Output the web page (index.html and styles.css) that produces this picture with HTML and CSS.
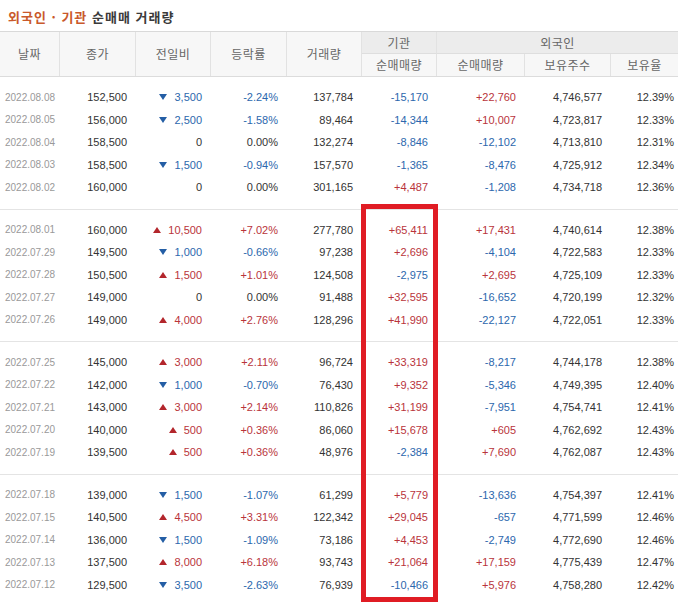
FILE: index.html
```html
<!DOCTYPE html>
<html lang="ko">
<head>
<meta charset="utf-8">
<title>외국인 · 기관 순매매 거래량</title>
<link rel="stylesheet" href="styles.css">
</head>
<body>
<div class="page">
  <h2 class="title"><span class="accent">외국인 · 기관</span> 순매매 거래량</h2>
  <div class="head">
    <div class="hc span2">날짜</div>
    <div class="hc span2">종가</div>
    <div class="hc span2">전일비</div>
    <div class="hc span2">등락률</div>
    <div class="hc span2">거래량</div>
    <div class="hc grp">기관</div>
    <div class="hc grp grp3 last">외국인</div>
    <div class="hc">순매매량</div>
    <div class="hc">순매매량</div>
    <div class="hc">보유주수</div>
    <div class="hc last">보유율</div>
  </div>

  <div class="group">
    <div class="row"><span class="date">2022.08.08</span><span>152,500</span><span class="dn"><i class="tri"></i>3,500</span><span class="dn">-2.24%</span><span>137,784</span><span class="dn">-15,170</span><span class="up">+22,760</span><span>4,746,577</span><span class="pct">12.39%</span></div>
    <div class="row"><span class="date">2022.08.05</span><span>156,000</span><span class="dn"><i class="tri"></i>2,500</span><span class="dn">-1.58%</span><span>89,464</span><span class="dn">-14,344</span><span class="up">+10,007</span><span>4,723,817</span><span class="pct">12.33%</span></div>
    <div class="row"><span class="date">2022.08.04</span><span>158,500</span><span>0</span><span>0.00%</span><span>132,274</span><span class="dn">-8,846</span><span class="dn">-12,102</span><span>4,713,810</span><span class="pct">12.31%</span></div>
    <div class="row"><span class="date">2022.08.03</span><span>158,500</span><span class="dn"><i class="tri"></i>1,500</span><span class="dn">-0.94%</span><span>157,570</span><span class="dn">-1,365</span><span class="dn">-8,476</span><span>4,725,912</span><span class="pct">12.34%</span></div>
    <div class="row"><span class="date">2022.08.02</span><span>160,000</span><span>0</span><span>0.00%</span><span>301,165</span><span class="up">+4,487</span><span class="dn">-1,208</span><span>4,734,718</span><span class="pct">12.36%</span></div>
  </div>

  <div class="group">
    <div class="row"><span class="date">2022.08.01</span><span>160,000</span><span class="up"><i class="tri"></i>10,500</span><span class="up">+7.02%</span><span>277,780</span><span class="up">+65,411</span><span class="up">+17,431</span><span>4,740,614</span><span class="pct">12.38%</span></div>
    <div class="row"><span class="date">2022.07.29</span><span>149,500</span><span class="dn"><i class="tri"></i>1,000</span><span class="dn">-0.66%</span><span>97,238</span><span class="up">+2,696</span><span class="dn">-4,104</span><span>4,722,583</span><span class="pct">12.33%</span></div>
    <div class="row"><span class="date">2022.07.28</span><span>150,500</span><span class="up"><i class="tri"></i>1,500</span><span class="up">+1.01%</span><span>124,508</span><span class="dn">-2,975</span><span class="up">+2,695</span><span>4,725,109</span><span class="pct">12.33%</span></div>
    <div class="row"><span class="date">2022.07.27</span><span>149,000</span><span>0</span><span>0.00%</span><span>91,488</span><span class="up">+32,595</span><span class="dn">-16,652</span><span>4,720,199</span><span class="pct">12.32%</span></div>
    <div class="row"><span class="date">2022.07.26</span><span>149,000</span><span class="up"><i class="tri"></i>4,000</span><span class="up">+2.76%</span><span>128,296</span><span class="up">+41,990</span><span class="dn">-22,127</span><span>4,722,051</span><span class="pct">12.33%</span></div>
  </div>

  <div class="group">
    <div class="row"><span class="date">2022.07.25</span><span>145,000</span><span class="up"><i class="tri"></i>3,000</span><span class="up">+2.11%</span><span>96,724</span><span class="up">+33,319</span><span class="dn">-8,217</span><span>4,744,178</span><span class="pct">12.38%</span></div>
    <div class="row"><span class="date">2022.07.22</span><span>142,000</span><span class="dn"><i class="tri"></i>1,000</span><span class="dn">-0.70%</span><span>76,430</span><span class="up">+9,352</span><span class="dn">-5,346</span><span>4,749,395</span><span class="pct">12.40%</span></div>
    <div class="row"><span class="date">2022.07.21</span><span>143,000</span><span class="up"><i class="tri"></i>3,000</span><span class="up">+2.14%</span><span>110,826</span><span class="up">+31,199</span><span class="dn">-7,951</span><span>4,754,741</span><span class="pct">12.41%</span></div>
    <div class="row"><span class="date">2022.07.20</span><span>140,000</span><span class="up"><i class="tri"></i>500</span><span class="up">+0.36%</span><span>86,060</span><span class="up">+15,678</span><span class="up">+605</span><span>4,762,692</span><span class="pct">12.43%</span></div>
    <div class="row"><span class="date">2022.07.19</span><span>139,500</span><span class="up"><i class="tri"></i>500</span><span class="up">+0.36%</span><span>48,976</span><span class="dn">-2,384</span><span class="up">+7,690</span><span>4,762,087</span><span class="pct">12.43%</span></div>
  </div>

  <div class="group last">
    <div class="row"><span class="date">2022.07.18</span><span>139,000</span><span class="dn"><i class="tri"></i>1,500</span><span class="dn">-1.07%</span><span>61,299</span><span class="up">+5,779</span><span class="dn">-13,636</span><span>4,754,397</span><span class="pct">12.41%</span></div>
    <div class="row"><span class="date">2022.07.15</span><span>140,500</span><span class="up"><i class="tri"></i>4,500</span><span class="up">+3.31%</span><span>122,342</span><span class="up">+29,045</span><span class="dn">-657</span><span>4,771,599</span><span class="pct">12.46%</span></div>
    <div class="row"><span class="date">2022.07.14</span><span>136,000</span><span class="dn"><i class="tri"></i>1,500</span><span class="dn">-1.09%</span><span>73,186</span><span class="up">+4,453</span><span class="dn">-2,749</span><span>4,772,690</span><span class="pct">12.46%</span></div>
    <div class="row"><span class="date">2022.07.13</span><span>137,500</span><span class="up"><i class="tri"></i>8,000</span><span class="up">+6.18%</span><span>93,743</span><span class="up">+21,064</span><span class="up">+17,159</span><span>4,775,439</span><span class="pct">12.47%</span></div>
    <div class="row"><span class="date">2022.07.12</span><span>129,500</span><span class="dn"><i class="tri"></i>3,500</span><span class="dn">-2.63%</span><span>76,939</span><span class="dn">-10,466</span><span class="up">+5,976</span><span>4,758,280</span><span class="pct">12.42%</span></div>
  </div>

  <div class="highlight"></div>
</div>
</body>
</html>
```

FILE: styles.css
```css
* { box-sizing: border-box; }
html, body { margin: 0; padding: 0; background: #fff; }
body { width: 678px; height: 603px; overflow: hidden; }

.page {
  position: relative;
  width: 678px;
  font-family: "Liberation Sans", Arial, sans-serif;
}

.title {
  margin: 0;
  height: 31px;
  padding: 9px 0 0 8px;
  font-family: "Noto Sans CJK KR", sans-serif;
  font-size: 13px;
  line-height: 16px;
  letter-spacing: 1px;
  font-weight: 700;
  color: #3a3a3a;
}
.title .accent { color: #c9592b; }

.head {
  display: grid;
  grid-template-columns: 60px 76px 75px 76px 75px 75px 88px 86px 67px;
  grid-template-rows: 22px 22px;
  border-top: 1px solid #d9d9d9;
  border-bottom: 1px solid #dcdcdc;
  background: #f7f7f7;
}
.hc {
  display: flex;
  align-items: center;
  justify-content: center;
  border-right: 1px solid #e2e2e2;
  font-family: "Noto Sans CJK KR", sans-serif;
  font-size: 12px;
  letter-spacing: 0.5px;
  color: #666;
  padding-bottom: 1px;
}
.hc.last { border-right: none; }
.hc.span2 { grid-row: span 2; }
.hc.grp {
  background: #ececec;
  border-bottom: 1px solid #dedede;
}
.hc.grp3 { grid-column: span 3; }

.group {
  padding: 9px 0 10px;
  border-bottom: 1px solid #e4e4e4;
}
.group.last { border-bottom: none; }

.row {
  display: grid;
  grid-template-columns: 60px 76px 75px 76px 75px 75px 88px 86px 67px;
  height: 22.5px;
  align-items: center;
  font-size: 11px;
  color: #333;
}
.row span {
  text-align: right;
  padding-right: 9px;
  white-space: nowrap;
}
.row span.date {
  text-align: center;
  padding-right: 0;
  font-size: 10px;
  color: #999;
}
.row span.pct { padding-right: 4px; }

.up { color: #b9343b; }
.dn { color: #2c67ad; }

.tri {
  display: inline-block;
  width: 0;
  height: 0;
  margin-right: 7px;
  vertical-align: 1px;
  border-left: 4px solid transparent;
  border-right: 4px solid transparent;
}
.up .tri { border-bottom: 6px solid #b3262c; }
.dn .tri { border-top: 6px solid #245ea5; }

.highlight {
  position: absolute;
  left: 361px;
  top: 204px;
  width: 77px;
  height: 398px;
  border: 5px solid #e01c24;
  pointer-events: none;
}
```
